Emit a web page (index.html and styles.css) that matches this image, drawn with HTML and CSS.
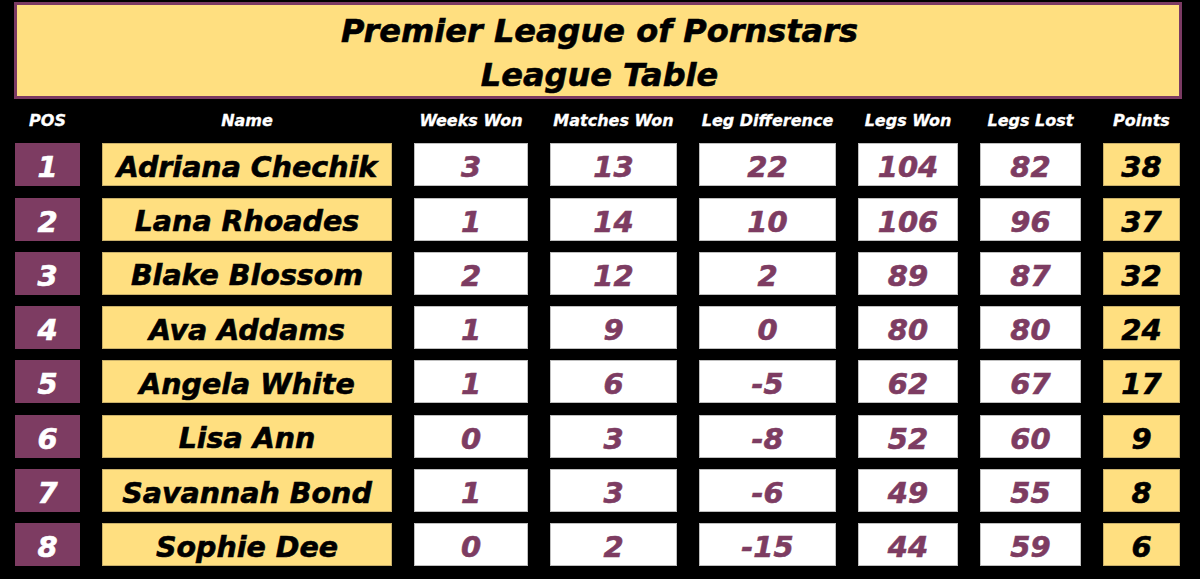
FILE: index.html
```html
<!DOCTYPE html>
<html>
<head>
    <meta charset="UTF-8">
    <title>League Table</title>
    <link rel="stylesheet" href="styles.css">
</head>
<body>

    <!-- Title -->
    <div class="title-box">
        <h1>Premier League of Pornstars<br>League Table</h1>
    </div>

    <!-- Table -->
    <div class="table">
        <div class="head">POS</div>
        <div class="head">Name</div>
        <div class="head">Weeks Won</div>
        <div class="head">Matches Won</div>
        <div class="head">Leg Difference</div>
        <div class="head">Legs Won</div>
        <div class="head">Legs Lost</div>
        <div class="head">Points</div>

        <div class="pos">1</div><div class="name">Adriana Chechik</div><div class="stat">3</div><div class="stat">13</div><div class="stat">22</div><div class="stat">104</div><div class="stat">82</div><div class="pts">38</div>
        <div class="pos">2</div><div class="name">Lana Rhoades</div><div class="stat">1</div><div class="stat">14</div><div class="stat">10</div><div class="stat">106</div><div class="stat">96</div><div class="pts">37</div>
        <div class="pos">3</div><div class="name">Blake Blossom</div><div class="stat">2</div><div class="stat">12</div><div class="stat">2</div><div class="stat">89</div><div class="stat">87</div><div class="pts">32</div>
        <div class="pos">4</div><div class="name">Ava Addams</div><div class="stat">1</div><div class="stat">9</div><div class="stat">0</div><div class="stat">80</div><div class="stat">80</div><div class="pts">24</div>
        <div class="pos">5</div><div class="name">Angela White</div><div class="stat">1</div><div class="stat">6</div><div class="stat">-5</div><div class="stat">62</div><div class="stat">67</div><div class="pts">17</div>
        <div class="pos">6</div><div class="name">Lisa Ann</div><div class="stat">0</div><div class="stat">3</div><div class="stat">-8</div><div class="stat">52</div><div class="stat">60</div><div class="pts">9</div>
        <div class="pos">7</div><div class="name">Savannah Bond</div><div class="stat">1</div><div class="stat">3</div><div class="stat">-6</div><div class="stat">49</div><div class="stat">55</div><div class="pts">8</div>
        <div class="pos">8</div><div class="name">Sophie Dee</div><div class="stat">0</div><div class="stat">2</div><div class="stat">-15</div><div class="stat">44</div><div class="stat">59</div><div class="pts">6</div>
    </div>

</body>
</html>
```

FILE: styles.css
```css
/* General */
body {
    margin: 0;
    background: #000000;
    font-family: 'DejaVu Sans', Verdana, sans-serif;
    font-weight: bold;
    font-style: italic;
    overflow: hidden;
}

.title-box {
    margin: 2px 18px 0 14px;
    height: 91px;
    background: #FFDF80;
    border: 3px solid #7B3A63;
    display: flex;
    align-items: center;
    justify-content: center;
}

h1 {
    margin: 0;
    font-size: 32px;
    line-height: 44px;
    text-align: center;
    color: #000000;
    font-weight: bold;
    -webkit-text-stroke: 0.6px #000000;
    padding: 4px 0 0 3px;
}

.table {
    display: grid;
    grid-template-columns: 65px 290px 114px 127px 137px 100px 101px 77px;
    grid-template-rows: 33px repeat(8, 43px);
    column-gap: 22px;
    row-gap: 11.3px;
    margin-left: 15px;
}

.head {
    color: #FFFFFF;
    font-size: 16px;
    text-align: center;
    line-height: 20px;
    padding-top: 12px;
    -webkit-text-stroke: 0.3px #FFFFFF;
}

.pos, .name, .stat, .pts {
    display: flex;
    align-items: center;
    justify-content: center;
    font-size: 29px;
    box-sizing: border-box;
    -webkit-text-stroke: 0.6px currentColor;
    padding-top: 5px;
}

.pos {
    background: #7D3C62;
    color: #FFFFFF;
}

.name {
    font-size: 28.5px;
    background: #FFDF80;
    color: #000000;
    border: 1px solid #C9B06A;
}

.stat {
    background: #FFFFFF;
    color: #7D3C62;
    border: 1px solid #BFBFBF;
}

.pts {
    background: #FFDF80;
    color: #000000;
    border: 1px solid #C9B06A;
}
```
